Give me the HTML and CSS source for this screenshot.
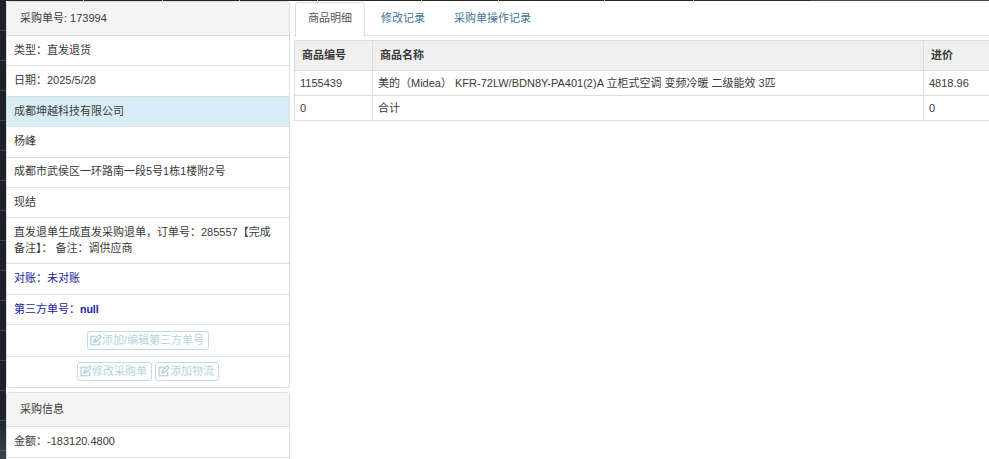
FILE: index.html
```html
<!DOCTYPE html>
<html lang="zh-CN">
<head>
<meta charset="utf-8">
<title>采购单</title>
<link rel="stylesheet" href="styles.css">
</head>
<body>
<div class="topline"></div>
<div class="app">
  <div class="rail"></div>
  <aside class="side">
    <section class="panel">
      <div class="panel-head">采购单号: 173994</div>
      <div class="item">类型：直发退货</div>
      <div class="item">日期：2025/5/28</div>
      <div class="item info">成都坤越科技有限公司</div>
      <div class="item">杨峰</div>
      <div class="item">成都市武侯区一环路南一段5号1栋1楼附2号</div>
      <div class="item">现结</div>
      <div class="item">直发退单生成直发采购退单，订单号：285557【完成备注】： 备注：调供应商</div>
      <div class="item navy">对账：未对账</div>
      <div class="item navy">第三方单号：<b class="null">null</b></div>
      <div class="item actions">
        <button class="btn"><svg class="ico" viewBox="0 0 12 12"><path d="M9.8 6.5V10.8H1V2.2H6.2"/><path d="M3.8 8.2 4.3 5.8 9.3 .9 11.2 2.7 6.2 7.7zM4.3 5.8 6.2 7.7"/></svg>添加/编辑第三方单号</button>
      </div>
      <div class="item actions last">
        <button class="btn"><svg class="ico" viewBox="0 0 12 12"><path d="M9.8 6.5V10.8H1V2.2H6.2"/><path d="M3.8 8.2 4.3 5.8 9.3 .9 11.2 2.7 6.2 7.7zM4.3 5.8 6.2 7.7"/></svg>修改采购单</button>
        <button class="btn"><svg class="ico" viewBox="0 0 12 12"><path d="M9.8 6.5V10.8H1V2.2H6.2"/><path d="M3.8 8.2 4.3 5.8 9.3 .9 11.2 2.7 6.2 7.7zM4.3 5.8 6.2 7.7"/></svg>添加物流</button>
      </div>
    </section>
    <section class="panel">
      <div class="panel-head">采购信息</div>
      <div class="item">金额：-183120.4800</div>
      <div class="item">&nbsp;</div>
    </section>
  </aside>
  <main class="content">
    <nav class="tabs">
      <a class="tab active">商品明细</a>
      <a class="tab">修改记录</a>
      <a class="tab">采购单操作记录</a>
    </nav>
    <table class="grid">
      <thead>
        <tr><th class="c1">商品编号</th><th class="c2">商品名称</th><th class="c3">进价</th></tr>
      </thead>
      <tbody>
        <tr><td>1155439</td><td>美的（Midea） KFR-72LW/BDN8Y-PA401(2)A 立柜式空调 变频冷暖 二级能效 3匹</td><td>4818.96</td></tr>
        <tr><td>0</td><td>合计</td><td>0</td></tr>
      </tbody>
    </table>
  </main>
</div>
</body>
</html>
```
FILE: styles.css
```css
* { box-sizing: border-box; }
html, body { margin: 0; height: 459px; overflow: hidden; background: #fff; }
body {
  font-family: "Liberation Sans", "Noto Sans CJK SC", sans-serif;
  font-size: 11px;
  line-height: 15.7px;
  color: #3a3a3a;
}
.topline {
  height: 1px;
  background:
    linear-gradient(to right,
      #23272d 0 83px, #ccc 83px 84px,
      #23272d 84px 162px, #ccc 162px 163px,
      #23272d 163px 239px, #ccc 239px 240px,
      #23272d 240px 317px, #ccc 317px 318px,
      #23272d 318px 421px, #ccc 421px 422px,
      #23272d 422px 498px, #ccc 498px 499px,
      #23272d 499px 604px, #ccc 604px 605px,
      #23272d 605px 693px, #ccc 693px 694px,
      #17303a 694px 810px, #444 810px);
}
.app { display: flex; height: 458px; }
.rail {
  width: 6px;
  flex: none;
  background:
    repeating-linear-gradient(to bottom, transparent 0 29px, rgba(255,255,255,.14) 29px 30px),
    linear-gradient(#1e2127 0, #1e2228 90%, #36424e 100%);
}
.side { width: 284px; flex: none; height: 458px; overflow: hidden; }
.panel {
  border: 1px solid #ddd;
  border-top: 0;
  border-radius: 4px;
  margin-bottom: 4px;
  background: #fff;
  box-shadow: 0 1px 1px rgba(0,0,0,.05);
}
.panel-head {
  height: 35px;
  padding: 9px 13px;
  background: #f5f5f5;
  border-top: 1px solid #ddd;
  border-bottom: 1px solid #ddd;
  border-radius: 4px 4px 0 0;
}
.item {
  padding: 6.85px 14px 6.85px 7px;
  border-bottom: 1px solid #ddd;
}
.item.info { background: #d9edf7; }
.item.navy { color: #1a1a9c; }
.null { font-weight: bold; font-size: 10.5px; }
.actions { text-align: center; padding: 6px 7px; height: 32px; }
.actions.last { border-bottom: 0; height: 30px; padding-top: 5px; }
.btn {
  display: inline-block;
  height: 19px;
  padding: 0 4px 0 3px;
  margin: 0;
  font: inherit;
  line-height: 17px;
  color: #b5d3da;
  background: #fff;
  border: 1px solid #c3dce2;
  border-radius: 3px;
  vertical-align: top;
}
.ico {
  width: 12px;
  height: 12px;
  vertical-align: -2px;
  margin-left: -1px;
  fill: none;
  stroke: #a9cdd6;
  stroke-width: 1.1;
}
.content { flex: 1; min-width: 0; padding-left: 4px; overflow: hidden; }
.tabs {
  display: flex;
  height: 35px;
  padding-left: 1px;
  border-bottom: 1px solid #ddd;
}
.tab {
  height: 35px;
  margin-top: 1px;
  padding: 8px 12px 0;
  color: #3f7397;
  border: 1px solid transparent;
  border-radius: 4px 4px 0 0;
  margin-right: 3px;
}
.tab.active {
  color: #555;
  background: #fff;
  border-color: #ddd #ddd #fff;
}
.grid {
  width: 699px;
  margin-top: 4px;
  border-collapse: collapse;
  table-layout: fixed;
}
.grid th, .grid td {
  border: 1px solid #ddd;
  padding: 4px 5px 3px;
  text-align: left;
  height: 25px;
}
.grid th { background: #f0f0f0; height: 30px; font-weight: bold; padding-left: 7px; }
.c1 { width: 78px; }
.c2 { width: 551px; }
.c3 { width: 70px; }
```
